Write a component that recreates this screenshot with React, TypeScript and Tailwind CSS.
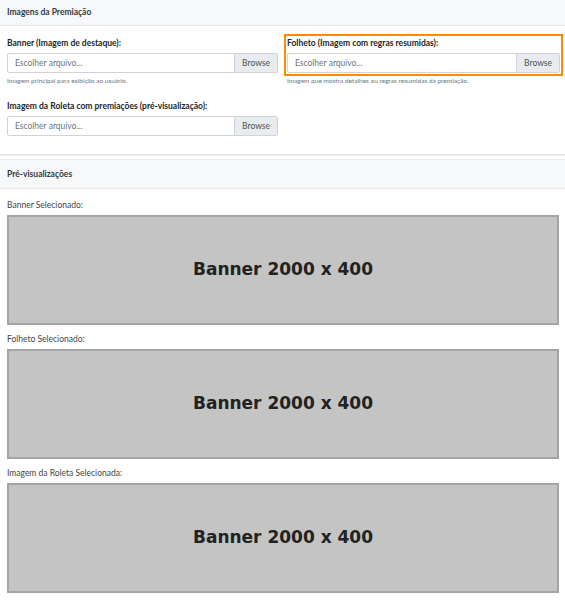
import React from "react";

const sans = { fontFamily: "'Lato', 'Noto Sans', sans-serif" };

function FileInput() {
    return (
        <div className="flex h-[20px] border border-[#ced4da] rounded-[2px] overflow-hidden bg-white">
            <span className="flex-1 flex items-center px-[7px] text-[8.5px] text-[#6c757d]">Escolher arquivo...</span>
            <span className="flex items-center px-[7px] bg-[#e9ecef] border-l border-[#ced4da] text-[8.5px] text-[#495057]">Browse</span>
        </div>
    );
}

function Field({ label, help, highlight }: { label: string; help?: string; highlight?: boolean }) {
    return (
        <div>
            <div className={highlight ? "outline-2 outline-[#ff8a00] outline-offset-[1px]" : ""}>
                <label className="block text-[8.5px] leading-[12px] font-bold text-[#212529] mb-[4px]">{label}</label>
                <FileInput />
            </div>
            {help && <p className="text-[6.5px] leading-[10px] text-[#6c757d] mt-[3px]">{help}</p>}
        </div>
    );
}

function Preview({ label }: { label: string }) {
    return (
        <div className="mt-[8px] first:mt-0">
            <div className="text-[8.5px] leading-[12px] text-[#444] mb-[4px]">{label}</div>
            <div className="w-[552px] h-[110px] bg-[#c4c4c4] border-2 border-[#a5a5a5] flex items-center justify-center">
                <span
                    className="text-[17px] font-bold text-[#222]"
                    style={{ fontFamily: "'DejaVu Sans', sans-serif" }}
                >
                    Banner 2000 x 400
                </span>
            </div>
        </div>
    );
}

export default function App() {
    return (
        <div className="w-[565px] bg-white" style={sans}>
            {/* Imagens */}
            <div className="border-b-2 border-[#e7e9ec]">
                <div className="h-[26px] flex items-center px-[7px] bg-[#f7f8fa] border-b border-[#e3e6ea]">
                    <span className="text-[8.5px] font-bold text-[#343a40]">Imagens da Premiação</span>
                </div>
                <div className="px-[7px] pt-[11px] pb-[18px]">
                    <div className="grid grid-cols-[271px_273px] gap-x-[9px]">
                        <Field label="Banner (Imagem de destaque):" help="Imagem principal para exibição ao usuário." />
                        <Field label="Folheto (Imagem com regras resumidas):" help="Imagem que mostra detalhes ou regras resumidas da premiação." highlight />
                    </div>
                    <div className="w-[271px] mt-[14px]">
                        <Field label="Imagem da Roleta com premiações (pré-visualização):" />
                    </div>
                </div>
            </div>

            {/* Pré-visualizações */}
            <div className="mt-[3px] border-t border-[#e7e9ec]">
                <div className="h-[29px] flex items-center px-[7px] bg-[#f7f8fa] border-b border-[#e3e6ea]">
                    <span className="text-[8.5px] font-bold text-[#343a40]">Pré-visualizações</span>
                </div>
                <div className="px-[7px] pt-[10px] pb-[8px]">
                    <Preview label="Banner Selecionado:" />
                    <Preview label="Folheto Selecionado:" />
                    <Preview label="Imagem da Roleta Selecionada:" />
                </div>
            </div>
        </div>
    );
}
